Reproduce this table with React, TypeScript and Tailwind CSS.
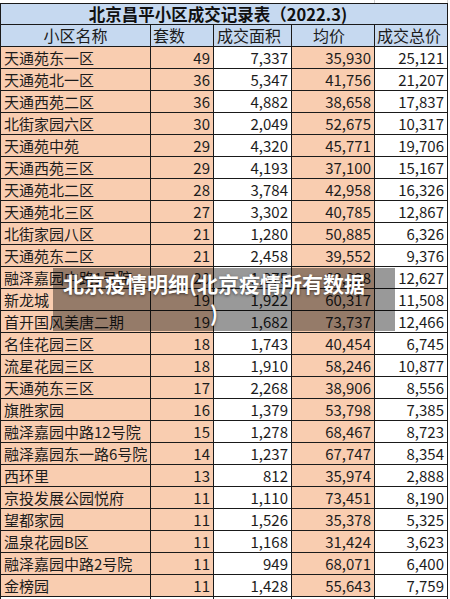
type Row = {
  name: string;
  count: number;
  area: string;
  price: string;
  total: string;
};

const rows: Row[] = [
  { name: "天通苑东一区", count: 49, area: "7,337", price: "35,930", total: "25,121" },
  { name: "天通苑北一区", count: 36, area: "5,347", price: "41,756", total: "21,207" },
  { name: "天通西苑二区", count: 36, area: "4,882", price: "38,658", total: "17,837" },
  { name: "北街家园六区", count: 30, area: "2,049", price: "52,675", total: "10,317" },
  { name: "天通苑中苑", count: 29, area: "4,320", price: "45,771", total: "19,706" },
  { name: "天通西苑三区", count: 29, area: "4,193", price: "37,100", total: "15,167" },
  { name: "天通苑北二区", count: 28, area: "3,784", price: "42,958", total: "16,326" },
  { name: "天通苑北三区", count: 27, area: "3,302", price: "40,785", total: "12,867" },
  { name: "北街家园八区", count: 21, area: "1,280", price: "50,885", total: "6,326" },
  { name: "天通苑东二区", count: 21, area: "2,458", price: "39,552", total: "9,376" },
  { name: "融泽嘉园中路1号院", count: 20, area: "1,975", price: "63,928", total: "12,627" },
  { name: "新龙城", count: 19, area: "1,922", price: "60,317", total: "11,508" },
  { name: "首开国风美唐二期", count: 19, area: "1,682", price: "73,737", total: "12,466" },
  { name: "名佳花园三区", count: 18, area: "1,743", price: "40,454", total: "6,745" },
  { name: "流星花园三区", count: 18, area: "1,910", price: "58,246", total: "10,877" },
  { name: "天通苑东三区", count: 17, area: "2,268", price: "38,906", total: "8,556" },
  { name: "旗胜家园", count: 16, area: "1,379", price: "53,798", total: "7,385" },
  { name: "融泽嘉园中路12号院", count: 15, area: "1,278", price: "68,467", total: "8,723" },
  { name: "融泽嘉园东一路6号院", count: 14, area: "1,237", price: "67,747", total: "8,354" },
  { name: "西环里", count: 13, area: "812", price: "35,974", total: "2,888" },
  { name: "京投发展公园悦府", count: 11, area: "1,110", price: "73,451", total: "8,190" },
  { name: "望都家园", count: 11, area: "1,526", price: "35,378", total: "5,325" },
  { name: "温泉花园B区", count: 11, area: "1,168", price: "31,424", total: "3,623" },
  { name: "融泽嘉园中路2号院", count: 11, area: "949", price: "68,071", total: "6,400" },
  { name: "金榜园", count: 11, area: "1,428", price: "55,643", total: "7,759" },
];

const grid = "grid grid-cols-[150px_63px_78px_83px_73px]";
const cell = "h-[22px] border-r border-b border-[#1a1a1a] leading-[21px] whitespace-nowrap";
const peach = "bg-[#f9cdb0]";

const App = () => {
  return (
    <div className="relative h-[599px] w-[450px] overflow-hidden bg-white font-['Noto_Sans_CJK_SC','Noto_Sans',sans-serif] text-[#1c1c1c]">
      {/* sheet row above the table */}
      <div className="relative h-[3px] w-[448px]">
        <div className="absolute left-[374px] top-0 h-[3px] w-px bg-[#cfcfcf]" />
        <div className="absolute left-[447px] top-0 h-[3px] w-px bg-[#cfcfcf]" />
      </div>

      <div className="w-[448px] border-l border-[#1a1a1a]">
        <div className="h-[22px] border-t border-r border-b border-[#1a1a1a] bg-[#c6d9f0] pr-[12px] text-center text-[16.5px] font-bold leading-[20px] text-[#111]">
          北京昌平小区成交记录表（2022.3)
        </div>

        <div className={`${grid} bg-[#c6d9f0] text-[16px]`}>
          <div className={`${cell} text-center`}>小区名称</div>
          <div className={`${cell} pl-[2px]`}>套数</div>
          <div className={`${cell} pl-[3px]`}>成交面积</div>
          <div className={`${cell} pr-[8px] text-center`}>均价</div>
          <div className={`${cell} pl-[2px]`}>成交总价</div>
        </div>

        {rows.map((row) => (
          <div key={row.name} className={`${grid} text-[15px]`}>
            <div className={`${cell} ${peach} pl-[3px]`}>{row.name}</div>
            <div className={`${cell} ${peach} pr-[3px] text-right`}>{row.count}</div>
            <div className={`${cell} pr-[3px] text-right`}>{row.area}</div>
            <div className={`${cell} ${peach} pr-[3px] text-right`}>{row.price}</div>
            <div className={`${cell} pr-[3px] text-right`}>{row.total}</div>
          </div>
        ))}

        <div className={grid}>
          <div className={cell} />
          <div className={cell} />
          <div className={cell} />
          <div className={cell} />
          <div className={cell} />
        </div>
      </div>

      {/* watermark caption over the table */}
      <div className="absolute left-[53px] top-[268px] h-[63px] w-[342px] bg-black/40">
        <div className="w-[322px] text-center text-[21px] font-bold leading-[30px] text-white [text-shadow:0_1px_3px_rgba(0,0,0,0.55)]">
          北京疫情明细(北京疫情所有数据
          <br />)
        </div>
      </div>
    </div>
  );
};

export default App;
